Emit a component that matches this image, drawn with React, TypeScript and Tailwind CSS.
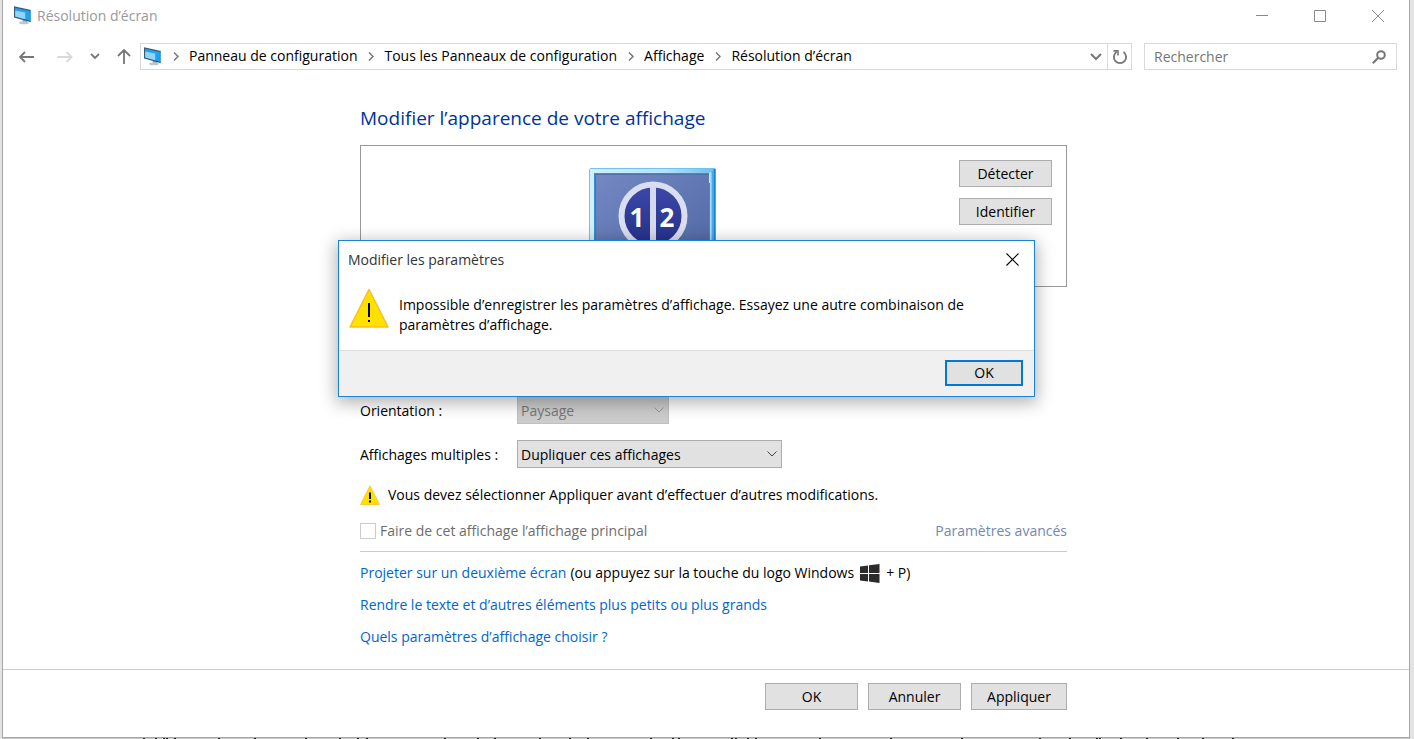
import { Fragment, type ReactNode } from "react";

const crumbs = ["Panneau de configuration", "Tous les Panneaux de configuration", "Affichage", "Résolution d’écran"];

// tops of the letters of the document lying behind the window
const ticks = [
  143, 155, 163, 166, 174, 218, 254, 305, 339, 357, 366, 444, 477, 494, 539, 569, 587, 650, 672, 678, 731, 735, 747,
  755, 819, 890, 961, 1039, 1069, 1096, 1099, 1120, 1146, 1177, 1202, 1232,
];

function MonitorIcon() {
  return (
    <svg width="18" height="19" viewBox="0 0 18 19" className="shrink-0" aria-hidden="true">
      <path d="M8.500 12.500l4.500 1.500v3H9z" fill="#93a1ac" />
      <ellipse cx="10" cy="16.800" rx="4.800" ry="1.500" fill="#bcc6ce" />
      <path d="M0 .2L17 4v12.200L0 11.400z" fill="#3b5b73" />
      <path d="M1.200 1.700L15.500 5v9.500L1.200 10.400z" fill="#1ea2f3" />
      <path d="M1.200 4.400l10 2.100v6.800l-10-2.900z" fill="#93d4fc" />
      <path d="M15.500 5l1.500-1v12.200l-1.500-1.500z" fill="#4ba4de" />
    </svg>
  );
}

function Chevron({ className = "" }: { className?: string }) {
  return (
    <svg width="12" height="8" viewBox="0 0 12 8" fill="none" stroke="currentColor" className={className} aria-hidden="true">
      <path d="M1.5 1.5L6 6l4.5-4.5" />
    </svg>
  );
}

function WarningIcon({ size, bold = false }: { size: number; bold?: boolean }) {
  return (
    <svg width={size} height={size} viewBox="0 0 40 40" className="shrink-0" aria-hidden="true">
      <path d="M20 1.5L39 39H1z" fill="#ffe100" stroke="#fdbd1c" strokeWidth="1.5" strokeLinejoin="round" />
      <rect x={bold ? 18 : 19} y="15" width={bold ? 4 : 2} height={bold ? 13 : 14} />
      <rect x={bold ? 18 : 19} y={bold ? 31 : 32} width={bold ? 4 : 2} height={bold ? 4 : 2} />
    </svg>
  );
}

function Button({ children, className = "w-[93px]" }: { children: ReactNode; className?: string }) {
  return (
    <button type="button" className={`h-[27px] border border-[#adadad] bg-[#e1e1e1] text-center ${className}`}>
      {children}
    </button>
  );
}

function TitleBar() {
  return (
    <header className="flex h-[31px] items-center pr-0.5 pl-[11px] text-[#999]">
      <MonitorIcon />
      <h1 className="ml-[5px] flex-1">Résolution d’écran</h1>
      <button type="button" aria-label="Réduire" className="flex h-full w-[58px] items-center justify-center">
        <svg width="12" height="12" viewBox="0 0 12 12" stroke="#888" aria-hidden="true">
          <path d="M0 5.5h12" />
        </svg>
      </button>
      <button type="button" aria-label="Agrandir" className="flex h-full w-[58px] items-center justify-center">
        <svg width="12" height="12" viewBox="0 0 12 12" fill="none" stroke="#888" aria-hidden="true">
          <path d="M.5.5h11v11H.5z" />
        </svg>
      </button>
      <button type="button" aria-label="Fermer" className="flex h-full w-[58px] items-center justify-center">
        <svg width="12" height="12" viewBox="0 0 12 12" stroke="#888" aria-hidden="true">
          <path d="M0 0l12 12M12 0L0 12" />
        </svg>
      </button>
    </header>
  );
}

function NavBar() {
  return (
    <nav className="mt-3 flex h-[27px] items-stretch pr-3 pl-4 text-[#777]">
      <button type="button" aria-label="Précédent" className="w-4">
        <svg width="16" height="12" viewBox="0 0 16 12" fill="none" stroke="currentColor" strokeWidth="1.8" aria-hidden="true">
          <path d="M15 6H1M6 1L1 6l5 5" />
        </svg>
      </button>
      <button type="button" aria-label="Suivant" disabled className="ml-[22px] w-4 text-[#d9d9d9]">
        <svg width="16" height="12" viewBox="0 0 16 12" fill="none" stroke="currentColor" strokeWidth="1.8" aria-hidden="true">
          <path d="M.5 6h14M9.5 1l5 5-5 5" />
        </svg>
      </button>
      <button type="button" aria-label="Emplacements récents" className="ml-4 w-3">
        <svg width="10" height="7" viewBox="0 0 10 7" fill="none" stroke="currentColor" strokeWidth="1.8" className="mx-auto" aria-hidden="true">
          <path d="M1 1l4 4 4-4" />
        </svg>
      </button>
      <button type="button" aria-label="Dossier parent" className="ml-4 w-[14px]">
        <svg width="14" height="16" viewBox="0 0 14 16" fill="none" stroke="currentColor" strokeWidth="1.8" aria-hidden="true">
          <path d="M7 15V1M1 7l6-6 6 6" />
        </svg>
      </button>
      <div className="ml-[9px] flex min-w-0 flex-1 items-center border border-[#d9d9d9] pl-[3px]">
        <MonitorIcon />
        {crumbs.map((crumb) => (
          <Fragment key={crumb}>
            <svg width="6" height="9" viewBox="0 0 6 9" fill="none" stroke="#777" strokeWidth="1.5" className="mr-[10px] ml-[11px] shrink-0" aria-hidden="true">
              <path d="M1 .5l4 4-4 4" />
            </svg>
            <a href="#" className="pb-0.5 whitespace-nowrap text-black">{crumb}</a>
          </Fragment>
        ))}
        <button type="button" aria-label="Adresses précédentes" className="ml-auto flex h-full w-[23px] items-center justify-center">
          <svg width="12" height="8" viewBox="0 0 12 8" fill="none" stroke="currentColor" strokeWidth="2" aria-hidden="true">
            <path d="M1 1l5 5 5-5" />
          </svg>
        </button>
        <button type="button" aria-label="Actualiser" className="flex h-full w-6 items-center justify-center border-l border-[#d9d9d9]">
          <svg width="16" height="16" viewBox="0 0 16 16" fill="none" stroke="currentColor" strokeWidth="1.9" aria-hidden="true">
            <path d="M11.5 3a6.1 6.1 0 1 1-7 0" />
            <path d="M1.5 1.9h4.500v4.500" strokeWidth="1.6" />
          </svg>
        </button>
      </div>
      <label className="ml-3 flex w-[253px] items-center border border-[#d9d9d9] pr-[10px] pl-[9px]">
        <input type="search" aria-label="Rechercher" placeholder="Rechercher" className="min-w-0 flex-1 outline-none placeholder:text-[#757575]" />
        <svg width="14" height="14" viewBox="0 0 14 14" fill="none" stroke="currentColor" strokeWidth="2" aria-hidden="true">
          <circle cx="9" cy="5" r="3.8" />
          <path d="M6.3 7.7L.8 13.2" strokeWidth="2.2" />
        </svg>
      </label>
    </nav>
  );
}

function DuplicatedDisplay() {
  return (
    <svg width="128" height="98" viewBox="0 0 128 98" role="img" aria-label="Affichages 1 et 2 dupliqués">
      <defs>
        <linearGradient id="frame" x1="0" x2="1" y1="0" y2="0">
          <stop offset="0" stopColor="#d2effc" />
          <stop offset=".6" stopColor="#b4e1fa" />
          <stop offset="1" stopColor="#6dbdee" />
        </linearGradient>
        <linearGradient id="screen" x1="0" x2="1" y1="0" y2="1">
          <stop offset="0" stopColor="#7489c4" />
          <stop offset="1" stopColor="#5067a3" />
        </linearGradient>
        <linearGradient id="disc" x1="0" x2="0" y1="0" y2="1">
          <stop offset="0" stopColor="#3c49a8" />
          <stop offset="1" stopColor="#252f89" />
        </linearGradient>
      </defs>
      <rect x=".5" y=".5" width="126" height="97" rx="1" fill="url(#frame)" stroke="#6fc3ee" />
      <path d="M125.5 1v96" stroke="#1b86d4" strokeWidth="2" />
      <path d="M123.5 3v94" stroke="#46aaea" strokeWidth="2" />
      <path d="M121.5 4v93" stroke="#a4dcfa" strokeWidth="2" />
      <rect x="5.5" y="5.5" width="115" height="87" fill="url(#screen)" stroke="#348fce" />
      <path d="M6.5 92V6.5H120" fill="none" stroke="#5570a8" />
      <path d="M120.5 5v10" stroke="#cceafa" />
      <circle cx="64" cy="48" r="31.5" fill="url(#disc)" stroke="#d9def0" strokeWidth="6" />
      <path d="M64 18v60" stroke="#d5d9ed" strokeWidth="6" />
      <text x="48" y="59" textAnchor="middle" fill="#fff" fontSize="26" fontWeight="700">1</text>
      <text x="78" y="59" textAnchor="middle" fill="#fff" fontSize="26" fontWeight="700">2</text>
    </svg>
  );
}

function ErrorDialog() {
  return (
    <div
      role="alertdialog"
      aria-labelledby="dialog-title"
      aria-describedby="dialog-text"
      className="absolute top-[136px] -left-[6px] w-[697px] border border-[#1883d7] bg-white shadow-[0_4px_16px_2px_rgba(0,0,0,0.3)]"
    >
      <div className="flex h-[37px] items-center justify-between pr-[15px] pl-[9px]">
        <h2 id="dialog-title" className="text-[#333]">Modifier les paramètres</h2>
        <button type="button" aria-label="Fermer">
          <svg width="13" height="13" viewBox="0 0 13 13" stroke="#000" strokeWidth="1.1" aria-hidden="true">
            <path d="M.5.5l12 12M12.5.5l-12 12" />
          </svg>
        </button>
      </div>
      <div className="flex gap-[10px] pt-[10px] pr-10 pb-[15px] pl-[10px]">
        <WarningIcon size={40} />
        <p id="dialog-text" className="pt-[7px]">
          Impossible d’enregistrer les paramètres d’affichage. Essayez une autre combinaison de paramètres d’affichage.
        </p>
      </div>
      <div className="flex justify-end border-t border-[#dfdfdf] bg-[#f0f0f0] pt-[9px] pr-[11px] pb-[10px]">
        <button type="button" className="h-[26px] w-[78px] border-2 border-[#0078d7] bg-[#e1e1e1] leading-5">OK</button>
      </div>
    </div>
  );
}

export default function App() {
  return (
    <div className="flex min-h-screen flex-col bg-[#e3e3e3] pr-1 pl-0.5 font-['Open_Sans','Noto_Sans',sans-serif] text-sm leading-5 text-black">
      <div className="flex flex-1 flex-col border border-t-0 border-[#a6a6a6] bg-white">
        <TitleBar />
        <NavBar />

        <main className="relative mx-auto mt-[34px] w-full max-w-[724px] pr-px pl-4">
          <h2 className="text-[19px] leading-7 text-[#003399]">Modifier l’apparence de votre affichage</h2>
          <section className="relative mt-[13px] flex h-[142px] justify-end border border-[#999] pt-[14px] pr-[14px]">
            <div className="absolute top-[22px] left-[228px]">
              <DuplicatedDisplay />
            </div>
            <div className="flex flex-col gap-[11px]">
              <Button>Détecter</Button>
              <Button>Identifier</Button>
            </div>
          </section>

          <div className="mt-[109px] grid grid-cols-[157px_1fr] items-center gap-y-4">
            <label htmlFor="orientation" className="pt-0.5">Orientation :</label>
            <div className="relative w-[152px]">
              <select id="orientation" disabled className="h-7 w-full appearance-none border border-[#bfbfbf] bg-[#ccc] px-[3px] pt-0.5 text-[#777] opacity-100">
                <option>Paysage</option>
              </select>
              <Chevron className="pointer-events-none absolute top-[10px] right-1 text-[#999]" />
            </div>
            <label htmlFor="multiple" className="pt-0.5">Affichages multiples :</label>
            <div className="relative w-[265px]">
              <select id="multiple" className="h-7 w-full appearance-none border border-[#adadad] bg-[#e1e1e1] px-[3px] pt-0.5">
                <option>Dupliquer ces affichages</option>
              </select>
              <Chevron className="pointer-events-none absolute top-[10px] right-1 text-[#444]" />
            </div>
          </div>

          <p className="mt-[17px] flex items-center gap-2">
            <WarningIcon size={20} bold />
            Vous devez sélectionner Appliquer avant d’effectuer d’autres modifications.
          </p>

          <div className="mt-4 flex justify-between border-b border-[#ccc] pb-[10px] text-[#6d6d6d]">
            <label className="flex items-center gap-1">
              <input type="checkbox" disabled className="size-4 appearance-none border border-[#ccc] bg-white" />
              Faire de cet affichage l’affichage principal
            </label>
            <a href="#" className="text-[#7488ad]">Paramètres avancés</a>
          </div>

          <div className="mt-[11px] flex flex-col items-start gap-3 text-[#0066cc]">
            <p className="flex items-center text-black">
              <a href="#" className="mr-1 text-[#0066cc]">Projeter sur un deuxième écran</a>
              (ou appuyez sur la touche du logo Windows
              <svg width="20" height="19" viewBox="0 0 20 19" fill="#2b2b2b" className="mx-[6px]" role="img" aria-label="Windows">
                <path d="M0 2.5L8 1.5V9H0zM9 1.3L19.5 0v9H9zM0 10h8v7.5l-8-1zM9 10h10.5v9L9 17.6z" />
              </svg>
              + P)
            </p>
            <a href="#">Rendre le texte et d’autres éléments plus petits ou plus grands</a>
            <a href="#">Quels paramètres d’affichage choisir ?</a>
          </div>

          <ErrorDialog />
        </main>

        <footer className="mt-auto border-t border-[#ccc] pt-[13px] pb-[27px]">
          <div className="mx-auto flex w-full max-w-[724px] justify-end gap-[10px] pr-px">
            <Button>OK</Button>
            <Button>Annuler</Button>
            <Button className="w-24">Appliquer</Button>
          </div>
        </footer>
      </div>
      <div className="h-px bg-[#c8c8c8]">
        <svg width="1290" height="1" viewBox="2 0 1290 1" className="block" aria-hidden="true">
          {ticks.map((x) => (
            <rect key={x} x={x} y="0" width="2" height="1" fill="#222" />
          ))}
        </svg>
      </div>
    </div>
  );
}
